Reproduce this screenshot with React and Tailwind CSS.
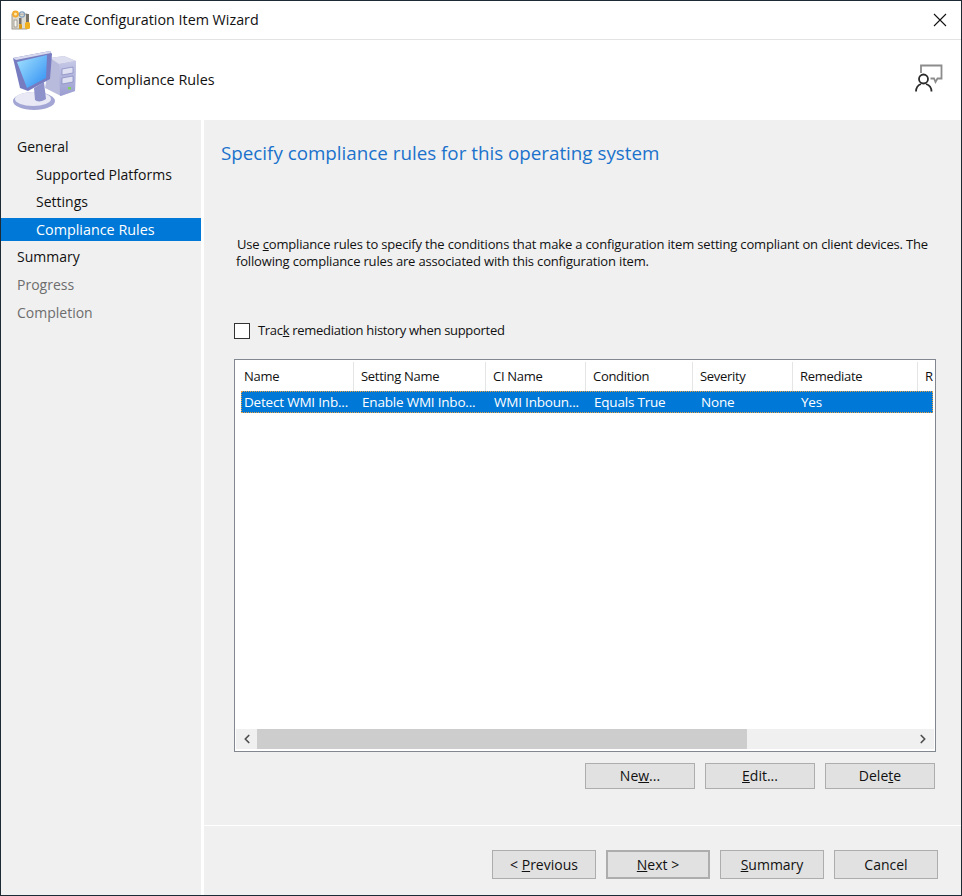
import { ChevronLeft, ChevronRight } from 'lucide-react'

const font = { fontFamily: '"Open Sans", "Noto Sans", sans-serif' }

const navItems = [
  { label: 'General' },
  { label: 'Supported Platforms', sub: true },
  { label: 'Settings', sub: true },
  { label: 'Compliance Rules', sub: true, active: true },
  { label: 'Summary' },
  { label: 'Progress', muted: true },
  { label: 'Completion', muted: true },
]

const columns = [
  { label: 'Name', value: 'Detect WMI Inb...', width: 'w-[117px]' },
  { label: 'Setting Name', value: 'Enable WMI Inbo...', width: 'w-[132px]' },
  { label: 'CI Name', value: 'WMI Inboun...', width: 'w-[100px]' },
  { label: 'Condition', value: 'Equals True', width: 'w-[107px]' },
  { label: 'Severity', value: 'None', width: 'w-[100px]' },
  { label: 'Remediate', value: 'Yes', width: 'w-[125px]' },
  { label: 'R', value: '', width: 'flex-1' },
]

function WizardIcon() {
  return (
    <svg width="20" height="20" viewBox="0 0 20 20" className="flex-shrink-0">
      <rect x="1" y="4" width="15" height="15" fill="#dedbd2" stroke="#8a8678" strokeWidth="0.8" />
      <rect x="3" y="10" width="3" height="7" fill="#f7f6f0" stroke="#77736a" strokeWidth="0.6" />
      <rect x="8" y="8" width="2.5" height="6" fill="#77736a" />
      <rect x="8" y="14" width="3" height="5" rx="1" fill="#d99a1a" />
      <rect x="15" y="4" width="3" height="9" fill="#77736a" />
      <rect x="14" y="12" width="5" height="7" rx="1.5" fill="#f0b020" />
      <circle cx="4.5" cy="4" r="3.4" fill="#f3a92d" />
      <circle cx="4.5" cy="4" r="1.5" fill="#fde9ad" />
      <circle cx="11" cy="4.5" r="2.6" fill="none" stroke="#7f9fbd" strokeWidth="1.1" />
    </svg>
  )
}

function ComputerIcon() {
  return (
    <svg width="70" height="70" viewBox="0 -1 70 70" className="flex-shrink-0">
      <defs>
        <linearGradient id="screen" x1="0" y1="0" x2="1" y2="1">
          <stop offset="0" stopColor="#a6e4ff" />
          <stop offset="1" stopColor="#2c8cf2" />
        </linearGradient>
        <linearGradient id="face" x1="0" y1="0" x2="0" y2="1">
          <stop offset="0" stopColor="#c6c8e6" />
          <stop offset="1" stopColor="#9a9dd0" />
        </linearGradient>
      </defs>
      {/* tower */}
      <path d="M42 12 L56 10 L68 15 L67 45 L53 50 L37 42 Z" fill="#b9bbdc" />
      <path d="M42 12 L56 10 L68 15 L51 18 Z" fill="#dcddee" />
      <path d="M51 18 L68 15 L67 45 L52 50 Z" fill="url(#face)" />
      <path d="M54 23 L65 21 L65 27 L54 29 Z" fill="#dfe0f1" stroke="#8386bd" strokeWidth="0.7" />
      <path d="M54 32 L65 30 L65 36 L54 38 Z" fill="#dfe0f1" stroke="#8386bd" strokeWidth="0.7" />
      <rect x="60" y="41" width="3" height="2.5" fill="#7fd05c" />
      {/* stand */}
      <ellipse cx="26" cy="55" rx="21" ry="9" fill="#a3a6d4" />
      <ellipse cx="25" cy="53" rx="18" ry="7" fill="#e8e9f5" />
      <path d="M26 42 L36 36 L38 53 C34 56 29 56 27 54 Z" fill="#8e92ca" />
      {/* monitor */}
      <path d="M5 12 L42 5 L44 8 L42 33 L20 45 L12 42 Z" fill="#777cc0" />
      <path d="M5 12 L42 5 L43 7 L8 14 Z" fill="#d6d8ee" />
      <path d="M9 16 L39 9 L38 32 L19 42 Z" fill="url(#screen)" />
    </svg>
  )
}

function FeedbackIcon() {
  return (
    <svg width="40" height="40" viewBox="0 0 40 40" fill="none" className="flex-shrink-0 mb-[4px]">
      <path d="M13 15 L13 7.5 L33.5 7.5 L33.5 20.5 L29.5 20.5 L27.5 24 L26 20.5 L22.5 20.5" stroke="#8c8c8c" strokeWidth="1.8" />
      <circle cx="15.5" cy="21" r="4.5" stroke="#2b2b2b" strokeWidth="1.8" />
      <path d="M8 33.5 C8 29 10.5 27 13 26 M23.5 33.5 C23.5 29 21 27 18 26" stroke="#2b2b2b" strokeWidth="1.8" />
    </svg>
  )
}

function CloseIcon() {
  return (
    <svg width="14" height="14" viewBox="0 0 14 14" fill="none" className="flex-shrink-0">
      <path d="M1 1 L13 13 M13 1 L1 13" stroke="#111" strokeWidth="1.1" />
    </svg>
  )
}

function WinButton({ children, className = '' }) {
  return (
    <button className={`bg-[#e1e1e1] border border-[#adadad] text-[14px] text-[#111] flex items-center justify-center ${className}`}>
      <span>{children}</span>
    </button>
  )
}

export default function App() {
  return (
    <div style={font} className="w-[962px] h-[896px] bg-white border border-[#1d2a33] flex flex-col overflow-hidden text-[14px] text-[#111]">
      {/* title bar */}
      <div className="h-[39px] flex items-center pl-[10px] pr-[14px] gap-[5px] border-b border-[#e3e3e3] flex-shrink-0">
        <WizardIcon />
        <span className="text-[14.3px] flex-1">Create Configuration Item Wizard</span>
        <CloseIcon />
      </div>

      {/* header */}
      <div className="h-[80px] flex items-center pl-[7px] pr-[13px] flex-shrink-0">
        <ComputerIcon />
        <span className="ml-[18px] text-[14.35px] flex-1">Compliance Rules</span>
        <FeedbackIcon />
      </div>

      <div className="flex flex-1 min-h-0">
        {/* sidebar */}
        <div className="w-[200px] bg-[#f0f0f0] pt-[15px] flex-shrink-0">
          {navItems.map((item) => (
            <div
              key={item.label}
              className={`h-[23px] mb-[4.6px] flex items-center ${item.active ? 'text-[14.35px]' : 'text-[14px]'} ${item.sub ? 'pl-[35px]' : 'pl-[16px]'} ${
                item.active ? 'bg-[#0078d7] text-white' : item.muted ? 'text-[#6d6d6d]' : ''
              }`}
            >
              {item.label}
            </div>
          ))}
        </div>

        {/* main */}
        <div className="ml-[3px] flex-1 bg-[#f0f0f0] flex flex-col min-w-0">
          <div className="flex-1 border-b border-white pl-[17px] pr-[22px] pt-[20px]">
            <h1 className="text-[18.8px] leading-[27px] text-[#1a72cc] whitespace-nowrap">Specify compliance rules for this operating system</h1>
            <p className="mt-[69px] pl-[15px] text-[13px] leading-[17px] tracking-[-0.17px] whitespace-nowrap">
              <span className="pl-[1px]">Use <u>c</u>ompliance rules to specify the conditions that make a configuration item setting compliant on client devices. The</span>
              <br />
              following compliance rules are associated with this configuration item.
            </p>

            <div className="mt-[51px] ml-[13px] flex items-center gap-[8px]">
              <span className="w-[16px] h-[16px] bg-white border border-[#333]" />
              <span className="text-[13px] tracking-[-0.3px]">Trac<u>k</u> remediation history when supported</span>
            </div>

            {/* rules list */}
            <div className="mt-[18px] ml-[13px] w-[702px] h-[393px] bg-white border border-[#828790] flex flex-col p-[1px]">
              <div className="flex h-[29px] pl-[1px] pr-[1px] mt-[1px] flex-shrink-0">
                {columns.map((col) => (
                  <div key={col.label} className={`${col.width} px-[7px] pt-[2px] border-r border-[#e5e5e5] last:border-r-0 flex items-center text-[13px] tracking-[-0.3px] overflow-hidden whitespace-nowrap`}>
                    {col.label}
                  </div>
                ))}
              </div>
              <div className="flex h-[22px] ml-[5px] mr-[1px] bg-[#0078d7] text-white outline-1 outline-dotted outline-[#e8a040] -outline-offset-1 flex-shrink-0">
                {columns.map((col, i) => (
                  <div key={col.label} className={`${i === 0 ? 'w-[112px] pl-[3px]' : `${col.width} pl-[9px]`} pt-[2px] flex items-center text-[13.5px] tracking-[-0.2px] overflow-hidden whitespace-nowrap`}>
                    {col.value}
                  </div>
                ))}
              </div>
              <div className="flex-1" />
              <div className="h-[20px] mb-[1px] bg-[#f0f0f0] flex items-center flex-shrink-0">
                <div className="w-[21px] flex justify-center">
                  <ChevronLeft size={14} strokeWidth={3} className="text-[#505050]" />
                </div>
                <div className="w-[490px] h-full bg-[#cdcdcd]" />
                <div className="flex-1" />
                <div className="w-[22px] flex justify-center">
                  <ChevronRight size={14} strokeWidth={3} className="text-[#505050]" />
                </div>
              </div>
            </div>

            <div className="mt-[11px] ml-[13px] w-[701px] flex justify-end gap-[10px]">
              <WinButton className="w-[110px] h-[26px]">Ne<u>w</u>...</WinButton>
              <WinButton className="w-[110px] h-[26px]"><u>E</u>dit...</WinButton>
              <WinButton className="w-[110px] h-[26px]">Dele<u>t</u>e</WinButton>
            </div>
          </div>

          {/* footer */}
          <div className="h-[69px] flex-shrink-0 flex justify-end gap-[10px] pt-[24px] pr-[23px]">
            <WinButton className="w-[104px] h-[29px]">&lt; <u>P</u>revious</WinButton>
            <WinButton className="w-[104px] h-[29px] border-2 border-[#0078d7]"><u>N</u>ext &gt;</WinButton>
            <WinButton className="w-[104px] h-[29px]"><u>S</u>ummary</WinButton>
            <WinButton className="w-[104px] h-[29px]">Cancel</WinButton>
          </div>
        </div>
      </div>
    </div>
  )
}
